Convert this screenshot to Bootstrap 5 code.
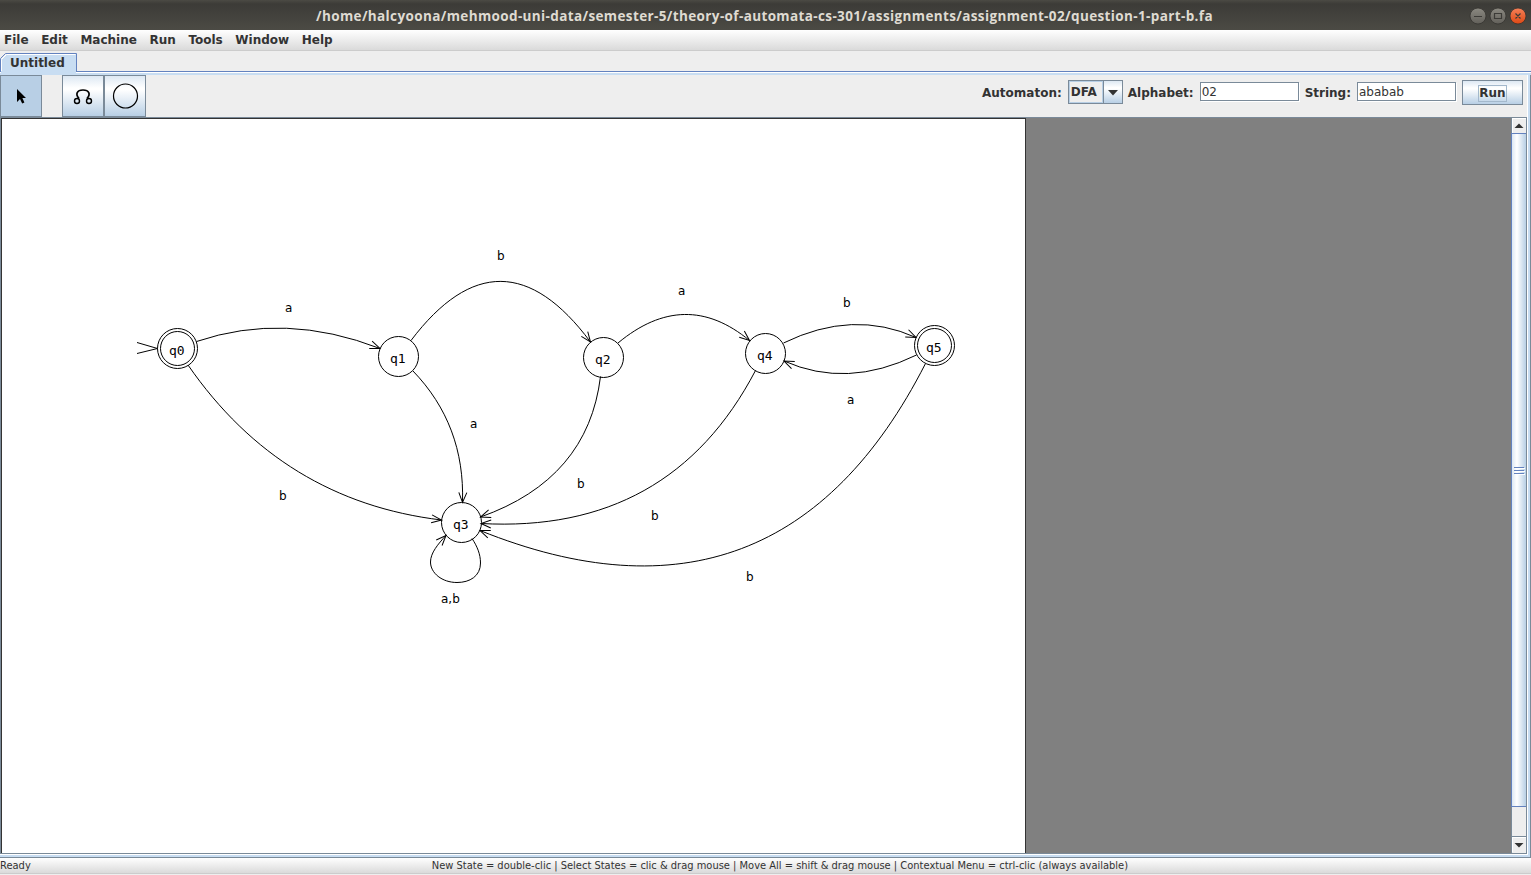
<!DOCTYPE html>
<html lang="en">
<head>
<meta charset="utf-8">
<title>Automaton editor</title>
<link href="https://cdn.jsdelivr.net/npm/bootstrap@5.3.0/dist/css/bootstrap.min.css" rel="stylesheet">
<style>
  body { font: bold 12px/14px "DejaVu Sans", sans-serif; color: #333; background: #eee; width: 1531px; height: 875px; overflow: hidden; }
  svg { display: block; }
  .titlebar { height: 30px; background: linear-gradient(#4b4a44 0, #3c3b37 4px, #4b4a44 29px); color: #dfdbd2; }
  .titlebar h1 { font: 700 13.5px/18px "Open Sans", sans-serif; white-space: nowrap; margin: 1px 0 0 316px; width: 1140px; letter-spacing: .372px; }
  .menus { height: 22px; background: linear-gradient(#fff, #dadada 20px, #ccc 20px, #ccc 21px, #eee 21px); padding: 3px 0 0 4px; gap: 12.6px; }
  .menus a { color: #333; text-decoration: none; }
  .tabs { height: 23px; padding-top: 1px; background: linear-gradient(#eee 19px, #6382bf 19px, #6382bf 20px, #fff 20px, #fff 21px, #c8ddf2 21px); }
  .tabs span { position: absolute; left: 10px; top: 4px; }
  .frame { height: 783px; border-right: 1px solid #7a8a99; border-bottom: 1px solid #7a8a99; box-shadow: inset -2px -2px #c8ddf2, inset -3px -3px #fff; padding: 0 3px 3px 0; }
  .tools { height: 42px; }
  .tool { width: 42px; height: 42px; border: 1px solid #7a8a99; }
  .metal { background: linear-gradient(#dde8f3, #fff 30%, #fff 34%, #b8cfe5); }
  .picked { background: #b8cfe5; margin-right: 20px; }
  .entry { padding: 5px 4px 0 0; }
  .entry > span { margin-top: 6px; }
  .combo { width: 55px; height: 24px; border: 1px solid #7a8a99; margin: 0 5px 0 6px; }
  .combo div { width: 35px; box-shadow: inset 0 0 0 1px #b8cfe5; border-right: 1px solid #7a8a99; padding: 4px 0 0 2px; }
  .field { width: 99px; height: 19px; border: 1px solid #7a8a99; border-radius: 0; background: #fff; font-weight: 400; line-height: 18px; padding-left: 1px; box-shadow: 1px 1px #fff; margin: 2px 6px 0 6px; }
  .runbtn { width: 61px; height: 25px; border: 1px solid #7a8a99; border-radius: 0; padding: 1px 0 0; color: #333; font: inherit; }
  .runbtn span { outline: 1px solid #a3b8cc; display: inline-block; line-height: 15px; }
  .pane { height: 737px; background: gray; border: 1px solid #7a8a99; }
  .paper { width: 1025px; height: 735px; background: #fff; border: solid #333; border-width: 1px 1px 0 1px; }
  .vbar { width: 15px; border-left: 1px solid #7a8a99; background: #eee; }
  .arrowbtn { height: 15px; border: solid #fff; border-width: 1px 0 0 1px; }
  .thumb { height: 674px; margin-left: -1px; border: 1px solid #6382bf; border-right: 0; background: linear-gradient(90deg, #dde8f3, #fff 35%, #b8cfe5); padding-top: 2px; }
  .gap-track { height: 30px; border-bottom: 1px solid #7a8a99; }
  .statusbar { height: 17px; font: 400 9.91px/14px "DejaVu Sans", sans-serif; background: linear-gradient(#fff, #dadada 15px, #ccc 15px, #ccc 16px, #eee 16px); padding-top: 1px; }
  .statusbar .hint { margin-left: 401px; white-space: nowrap; }
  .diagram text { font: 400 12px "DejaVu Sans", sans-serif; fill: #000; }
  .diagram .state-names text { font: 400 13px "DejaVu Sans Mono", monospace; }
</style>
</head>
<body>
<header class="titlebar d-flex align-items-center">
  <h1>/home/halcyoona/mehmood-uni-data/semester-5/theory-of-automata-cs-301/assignments/assignment-02/question-1-part-b.fa</h1>
  <svg width="74" height="30" viewBox="0 0 74 30" class="flex-shrink-0">
    <defs>
      <linearGradient id="gm" x2="0" y2="1"><stop stop-color="#8b8981"/><stop offset="1" stop-color="#62605a"/></linearGradient>
      <linearGradient id="gc" x2="0" y2="1"><stop stop-color="#f58058"/><stop offset="1" stop-color="#dd4814"/></linearGradient>
    </defs>
    <g stroke="#33322e" stroke-width=".8"><circle cx="22" cy="16" r="8" fill="url(#gm)"/><circle cx="42" cy="16" r="8" fill="url(#gm)"/><circle cx="62" cy="16" r="8" fill="url(#gc)"/></g>
    <path d="M18 16.500h8M38.500 13.500h7v5h-7zM59.500 13.500l5 5M64.500 13.500l-5 5" fill="none" stroke="#3c3b37" stroke-width="1.200"/>
  </svg>
</header>
<nav class="menus d-flex">
  <a href="#">File</a><a href="#">Edit</a><a href="#">Machine</a><a href="#">Run</a><a href="#">Tools</a><a href="#">Window</a><a href="#">Help</a>
</nav>
<div class="tabs position-relative">
  <svg width="78" height="22" viewBox="0 0 78 22"><path d="M1 22V6.500L6.500 1H76V22z" fill="#c8ddf2"/><path d="M1.500 18V6.500L6.500 1.500H75.500" fill="none" stroke="#fff"/><path d="M.5 18.500V5.500L5.500.5H76.500V18.500" fill="none" stroke="#6382bf"/></svg>
  <span>Untitled</span>
</div>
<main class="frame">
  <div class="tools d-flex">
    <div class="tool picked"><svg width="40" height="40" viewBox="0 0 40 40"><path d="M16 13v13l3-3 2.200 4.500 2.200-1-2-4.500H25z"/></svg></div>
    <div class="tool metal"><svg width="40" height="40" viewBox="0 0 40 40" fill="none" stroke="#000" stroke-width="1.400"><path d="M16 22.500C12 18 14 14 20 14S28 18 24 22.500" stroke-width="1.700"/><circle cx="14" cy="25" r="2.500"/><circle cx="26" cy="25" r="2.500"/></svg></div>
    <div class="tool metal"><svg width="40" height="40" viewBox="0 0 40 40"><circle cx="20.500" cy="20" r="12" fill="none" stroke="#000" stroke-width="1.200"/></svg></div>
    <div class="entry d-flex align-items-start ms-auto">
      <span>Automaton:</span>
      <div class="combo d-flex"><div>DFA</div><svg class="metal" width="18" height="22" viewBox="0 0 18 22"><path d="M4 9h10l-5 5.500z" fill="#333"/></svg></div>
      <span>Alphabet:</span><div class="field">02</div>
      <span>String:</span><div class="field">ababab</div>
      <button class="runbtn metal"><span>Run</span></button>
    </div>
  </div>
  <div class="pane d-flex">
    <div class="paper">
      <svg class="diagram" width="1023" height="734" viewBox="2 119 1023 734">
        <defs><marker id="tip" markerUnits="userSpaceOnUse" markerWidth="24" markerHeight="16" refX="12" refY="8" orient="auto"><path d="M2 4L12 8L2 12" fill="none" stroke="#000"/></marker></defs>
        <g fill="none" stroke="#000">
          <path d="M137 342.500L157.500 348.500L137 353.500"/>
          <circle cx="177.500" cy="348.500" r="20"/><circle cx="177.500" cy="348.500" r="17"/>
          <circle cx="398.500" cy="356.500" r="20"/>
          <circle cx="603.500" cy="357.500" r="20"/>
          <circle cx="461.500" cy="522.500" r="20"/>
          <circle cx="765.500" cy="353.500" r="20"/>
          <circle cx="934.500" cy="345.500" r="20"/><circle cx="934.500" cy="345.500" r="17"/>
          <path marker-end="url(#tip)" d="M196.500 341.500Q285 311.500 380 348.500"/>
          <path marker-end="url(#tip)" d="M411 340.500C471 261.200 530.800 261.700 590.500 342"/>
          <path marker-end="url(#tip)" d="M618 343C662.700 305.800 706.500 305 749.500 340.500"/>
          <path marker-end="url(#tip)" d="M783.500 343Q853 309 916 337.500"/>
          <path marker-end="url(#tip)" d="M916.500 355Q847 389 784 361"/>
          <path marker-end="url(#tip)" d="M188 365C250.700 455.700 335.200 507.300 441.500 520"/>
          <path marker-end="url(#tip)" d="M413 371C447.700 407 464.200 450.800 462.500 502.500"/>
          <path marker-end="url(#tip)" d="M600.500 376.500C592.200 444.800 552.200 491.700 480.500 517"/>
          <path marker-end="url(#tip)" d="M755.500 370.500C698.500 479.500 607 530.500 481 523.500"/>
          <path marker-end="url(#tip)" d="M925.500 363.500C828.500 554 680 611 480 530.500"/>
          <path marker-end="url(#tip)" d="M472 538.500C477 546 480.500 554 480.500 563C480.500 576 470 582.500 457 582.500C442 582.500 430.500 573 430.500 562C430.500 553 438 544 446 535.500"/>
        </g>
        <g class="state-names">
          <text x="169" y="355">q0</text><text x="390" y="363">q1</text><text x="595" y="364">q2</text><text x="453" y="529">q3</text><text x="757" y="360">q4</text><text x="926" y="352">q5</text>
        </g>
        <g>
          <text x="285" y="312">a</text><text x="497" y="260">b</text><text x="678" y="295">a</text><text x="843" y="307">b</text><text x="847" y="404">a</text><text x="470" y="428">a</text>
          <text x="279" y="500">b</text><text x="577" y="488">b</text><text x="651" y="520">b</text><text x="746" y="581">b</text><text x="441" y="603">a,b</text>
        </g>
      </svg>
    </div>
    <div class="vbar ms-auto">
      <div class="arrowbtn"><svg width="14" height="14" viewBox="0 0 14 14"><path d="M1.500 9h9L6 4.500z" fill="#333"/></svg></div>
      <div class="thumb d-flex align-items-center"><svg width="14" height="10" viewBox="0 0 14 10"><path d="M3 2.500h10M3 5.500h10M3 8.500h10" stroke="#fff"/><path d="M2 1.500h10M2 4.500h10M2 7.500h10" stroke="#6382bf"/></svg></div>
      <div class="gap-track"></div>
      <div class="arrowbtn"><svg width="14" height="14" viewBox="0 0 14 14"><path d="M1.500 5h9L6 9.500z" fill="#333"/></svg></div>
    </div>
  </div>
</main>
<footer class="statusbar d-flex"><span>Ready</span><span class="hint">New State = double-clic | Select States = clic &amp; drag mouse | Move All = shift &amp; drag mouse | Contextual Menu = ctrl-clic (always available)</span></footer>
<script src="https://cdn.jsdelivr.net/npm/bootstrap@5.3.0/dist/js/bootstrap.bundle.min.js"></script>
</body>
</html>
